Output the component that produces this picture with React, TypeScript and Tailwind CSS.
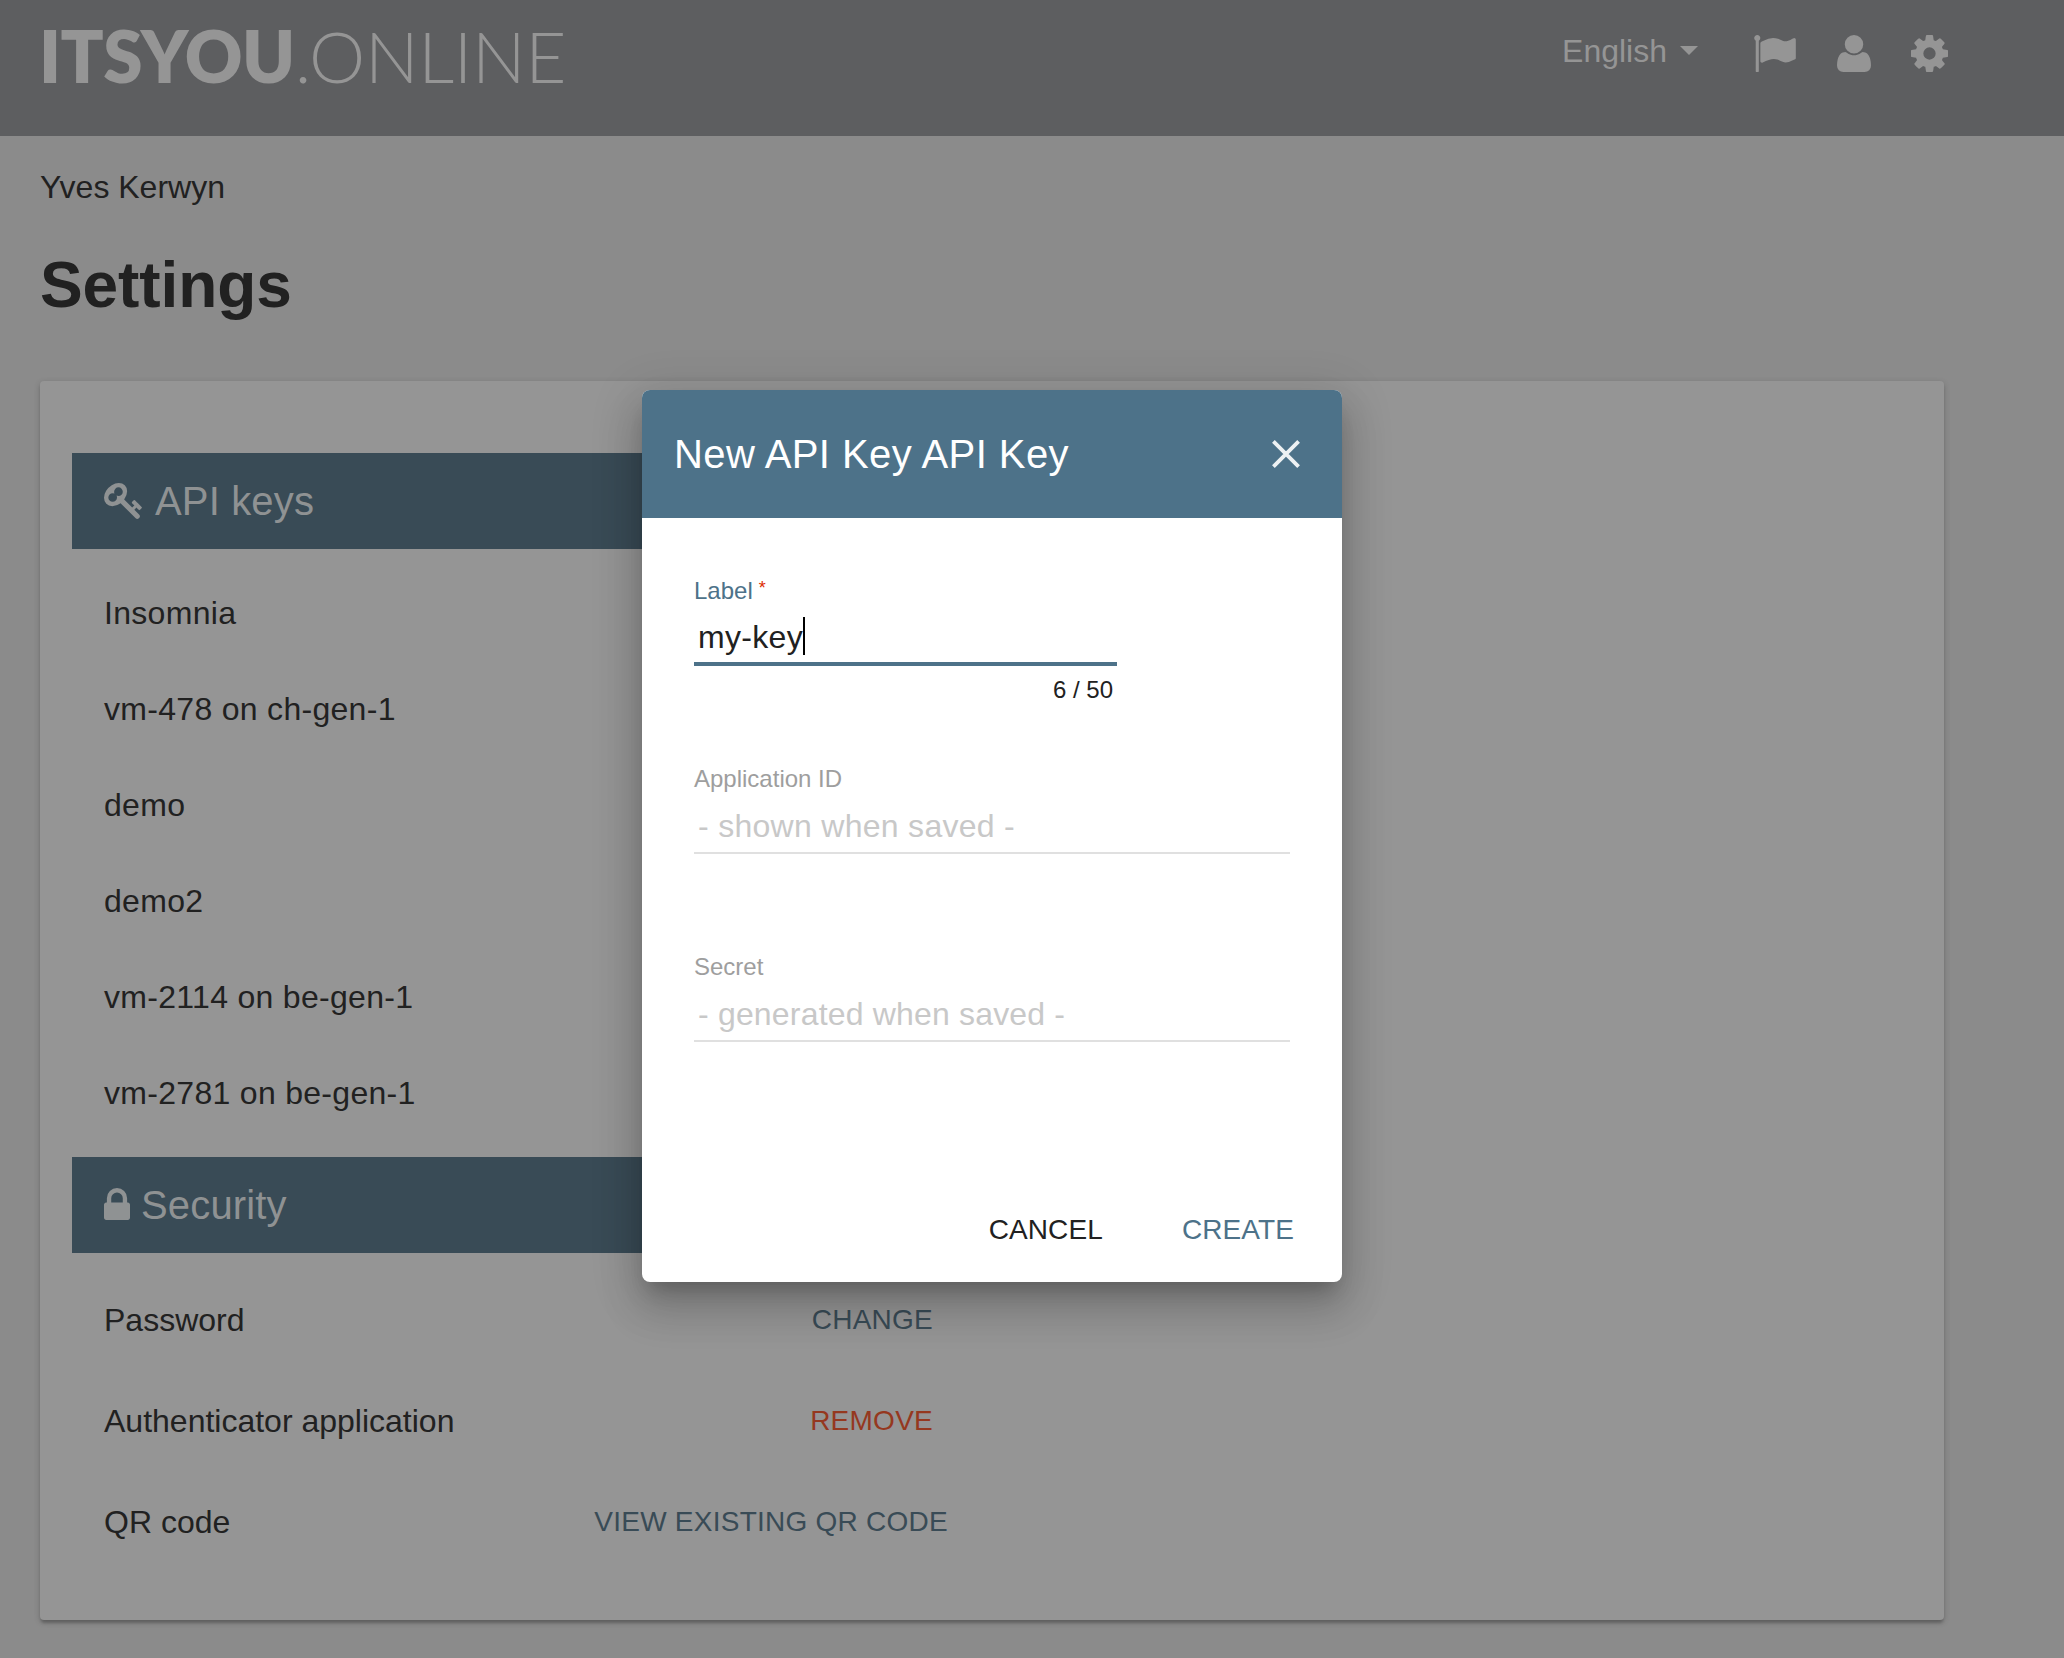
import React from "react";

const FLAG =
  "M320 256q0 72-64 110v1266q0 13-9.5 22.5t-22.5 9.5h-64q-13 0-22.5-9.5t-9.5-22.5v-1266q-64-38-64-110 0-53 37.5-90.5t90.5-37.5 90.5 37.5 37.5 90.5zm1472 64v763q0 25-12.5 38.5t-39.5 27.5q-215 116-369 116-61 0-123.5-22t-108.5-48-115.5-48-142.5-22q-192 0-464 146-17 9-33 9-26 0-45-19t-19-45v-742q0-32 31-55 21-14 79-43 236-120 421-120 107 0 200 29t219 88q38 19 88 19 54 0 117.5-21t110-47 88-47 54.5-21q26 0 45 19t19 45z";
const USER =
  "M1600 1405q0 120-73 189.5t-194 69.5h-874q-121 0-194-69.5t-73-189.5q0-53 3.5-103.5t14-109 26.5-108.5 43-97.5 62-81 85.5-53.5 111.5-20q9 0 42 21.5t74.5 48 108 48 133.5 21.5 133.5-21.5 108-48 74.5-48 42-21.5q61 0 111.5 20t85.5 53.5 62 81 43 97.5 26.5 108.5 14 109 3.5 103.5zm-320-893q0 159-112.5 271.5t-271.5 112.5-271.5-112.5-112.5-271.5 112.5-271.5 271.5-112.5 271.5 112.5 112.5 271.5z";
const COG =
  "M1152 896q0-106-75-181t-181-75-181 75-75 181 75 181 181 75 181-75 75-181zm512-109v222q0 12-8 23t-20 13l-185 28q-19 54-39 91 35 50 107 138 10 12 10 25t-9 23q-27 37-99 108t-94 71q-12 0-26-9l-138-108q-44 23-91 38-16 136-29 186-7 28-36 28h-222q-14 0-24.5-8.5t-11.5-21.5l-28-184q-49-16-90-37l-141 107q-10 9-25 9-14 0-25-11-126-114-165-168-7-10-7-23 0-12 8-23 15-21 51-66.5t54-70.5q-27-50-41-99l-183-27q-13-2-21-12.5t-8-23.5v-222q0-12 8-23t19-13l186-28q14-46 39-92-40-57-107-138-10-12-10-24 0-10 9-23 26-36 98.5-107.5t94.5-71.5q13 0 26 10l138 107q44-23 91-38 16-136 29-186 7-28 36-28h222q14 0 24.5 8.5t11.5 21.5l28 184q49 16 90 37l142-107q9-9 24-9 13 0 25 10 129 119 165 170 7 8 7 22 0 12-8 23-15 21-51 66.5t-54 70.5q26 50 41 98l183 28q13 2 21 12.5t8 23.5z";
const KEY =
  "M832 512q0-80-56-136t-136-56-136 56-56 136q0 42 19 83-41-19-83-19-80 0-136 56t-56 136 56 136 136 56 136-56 56-136q0-42-19-83 41 19 83 19 80 0 136-56t56-136zm851 704q0 17-49 66t-66 49q-9 0-28.5-16t-36.5-33-38.5-40-24.5-26l-96 96 220 220q28 28 28 68 0 42-39 81t-81 39q-40 0-68-28l-671-671q-176 131-365 131-163 0-265.5-102.5t-102.5-265.5q0-160 95-313t248-248 313-95q163 0 265.5 102.5t102.5 265.5q0 189-131 365l355 355 96-96q-3-3-26-24.5t-40-38.5-33-36.5-16-28.5q0-17 49-66t66-49q13 0 23 10 6 6 46 44.5t82 79.5 86.5 86 73 78 28.5 41z";
const LOCK =
  "M640 768h512v-192q0-106-75-181t-181-75-181 75-75 181v192zm832 96v576q0 40-28 68t-68 28h-960q-40 0-68-28t-28-68v-576q0-40 28-68t68-28h32v-192q0-184 132-316t316-132 316 132 132 316v192h32q40 0 68 28t28 68z";

function Icon({ d, box, className }: { d: string; box: string; className: string }) {
  return (
    <svg viewBox={box} className={className} fill="currentColor" aria-hidden="true">
      <path d={d} />
    </svg>
  );
}

function Header() {
  return (
    <header className="flex h-[136px] items-start bg-[#5d5e60] text-[#959595]">
      <div className="ml-[39px] flex h-[111px] items-center font-[Lato] text-[71px] leading-none whitespace-nowrap">
        <span className="font-extrabold tracking-[-0.5px]">ITSYOU</span>
        <span className="font-light tracking-[-0.3px]">.ONLINE</span>
      </div>
      <nav className="mt-[35px] mr-[116px] ml-auto flex items-start">
        <button className="-mt-[2px] flex items-center gap-[13px] text-[32px] leading-[36px]">
          English
          <span className="-mt-[1px] h-0 w-0 border-x-[9px] border-t-[9px] border-x-transparent border-t-[#959595]" />
        </button>
        <Icon d={FLAG} box="64 128 1728 1536" className="ml-[56px] h-[37px] w-[42px]" />
        <Icon d={USER} box="192 128 1408 1536" className="ml-[41px] h-[37px] w-[34px]" />
        <Icon d={COG} box="128 128 1536 1536" className="ml-[40px] h-[37px] w-[37px]" />
      </nav>
    </header>
  );
}

function SectionBar({ icon, title }: { icon: React.ReactNode; title: string }) {
  return (
    <div className="flex h-24 items-center bg-[#394b56] pl-8 text-[40px] tracking-[0.15px] text-[#8f9293]">
      {icon}
      <h2>{title}</h2>
    </div>
  );
}

const keys = ["Insomnia", "vm-478 on ch-gen-1", "demo", "demo2", "vm-2114 on be-gen-1", "vm-2781 on be-gen-1"];

const security = [
  { name: "Password", action: "CHANGE", style: "mr-[15px] text-[#394b56]" },
  { name: "Authenticator application", action: "REMOVE", style: "mr-[15px] text-[#95381f]" },
  { name: "QR code", action: "VIEW EXISTING QR CODE", style: "text-[#394b56]" },
];

function Field({ label, hint, hintStyle }: { label: string; hint: string; hintStyle: string }) {
  return (
    <div className="h-[188px]">
      <div className="text-[24px] leading-[30px] text-[#9e9e9e]">{label}</div>
      <div
        className={
          "mt-[6px] flex h-[54px] items-center border-b-2 border-[#e0e0e0] pb-[1px] pl-1 text-[32px] text-[#c8c8c8] " +
          hintStyle
        }
      >
        {hint}
      </div>
    </div>
  );
}

function Dialog() {
  return (
    <div
      role="dialog"
      className="absolute top-[390px] left-[642px] flex h-[892px] w-[700px] flex-col overflow-hidden rounded-lg bg-white shadow-[0_14px_18px_-8px_rgba(0,0,0,0.2),0_26px_40px_4px_rgba(0,0,0,0.14),0_10px_48px_8px_rgba(0,0,0,0.12)]"
    >
      <div className="flex h-32 shrink-0 items-center justify-between bg-[#4d7289] pr-[41px] pl-8 text-white">
        <h2 className="text-[40px] tracking-[0.43px]">New API Key API Key</h2>
        <svg viewBox="0 0 30 30" className="h-[30px] w-[30px]" stroke="#edf1f3" strokeWidth="3.8">
          <path d="M2.4 2.4 27.6 27.6M27.6 2.4 2.4 27.6" />
        </svg>
      </div>
      <div className="px-[52px] pt-[58px]">
        <div className="h-[188px] w-[423px]">
          <div className="flex text-[24px] leading-[30px] text-[#4d7289]">
            Label<span className="-mt-[3px] ml-[6px] text-[18px] text-[#dd2c00]">*</span>
          </div>
          <div className="mt-[6px] flex h-[54px] items-center border-b-4 border-[#4d7289] pl-1 text-[32px] tracking-[0.32px] text-[#212121]">
            my-key
            <span className="-mt-[2px] h-[38px] w-[2px] bg-black" />
          </div>
          <div className="mt-[9px] pr-1 text-right text-[24px] leading-[30px] text-[#212121]">6 / 50</div>
        </div>
        <Field label="Application ID" hint="- shown when saved -" hintStyle="tracking-[0.29px]" />
        <Field label="Secret" hint="- generated when saved -" hintStyle="tracking-[0.18px]" />
      </div>
      <div className="mt-auto mr-[48px] mb-[32px] flex justify-end gap-[79px] text-[28px] leading-[40px] tracking-[0.1px]">
        <button className="text-[#212121]">CANCEL</button>
        <button className="text-[#4d7289]">CREATE</button>
      </div>
    </div>
  );
}

export default function App() {
  return (
    <div className="relative h-[1658px] w-[2064px] overflow-hidden bg-[#8b8b8b] font-['Liberation_Sans',Arial,sans-serif] text-[#212121]">
      <Header />
      <main className="px-10">
        <div className="pt-[33px] text-[32px] leading-[36px]">Yves Kerwyn</div>
        <h1 className="mt-[44px] text-[64px] leading-[72px] font-bold tracking-[-0.1px]">Settings</h1>
        <section className="mt-[60px] h-[1239px] w-[1904px] rounded bg-[#959595] px-8 pt-[72px] shadow-[0_2px_6px_rgba(0,0,0,0.2),0_4px_3px_-1px_rgba(0,0,0,0.2)]">
          <div className="w-[904px]">
            <SectionBar
              title="API keys"
              icon={<Icon d={KEY} box="0 128 1683 1592" className="mr-[13px] h-[36px] w-[38px]" />}
            />
            <ul className="pt-4 text-[32px] tracking-[0.3px]">
              {keys.map((k) => (
                <li key={k} className="flex h-24 items-center pl-8">
                  {k}
                </li>
              ))}
            </ul>
            <div className="mt-4">
              <SectionBar
                title="Security"
                icon={<Icon d={LOCK} box="320 128 1152 1408" className="mr-[11px] -mt-[2px] h-[32px] w-[26px]" />}
              />
            </div>
            <ul className="pt-4">
              {security.map((s) => (
                <li key={s.name} className="flex h-[101px] items-center justify-between pr-[28px] pl-8">
                  <span className="text-[32px]">{s.name}</span>
                  <span className={"text-[28px] tracking-[0.25px] " + s.style}>{s.action}</span>
                </li>
              ))}
            </ul>
          </div>
        </section>
      </main>
      <Dialog />
    </div>
  );
}
